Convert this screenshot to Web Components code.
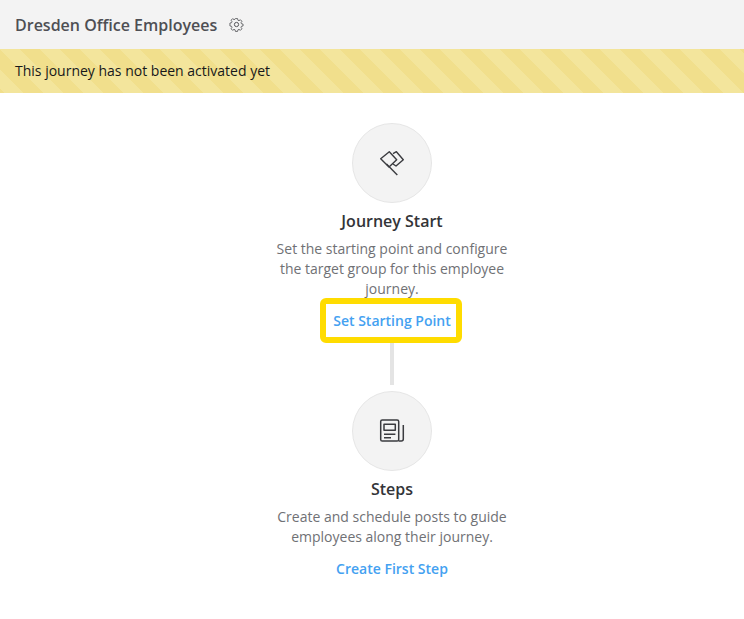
<!DOCTYPE html>
<html>
<head>
<meta charset="utf-8">
<title>Dresden Office Employees</title>
<style>
  html, body { margin: 0; padding: 0; background: #fff; }
  body { font-family: "Open Sans", "Liberation Sans", sans-serif; }
</style>
</head>
<body>
<journey-page>
  <journey-header slot="header" title="Dresden Office Employees"></journey-header>
  <journey-banner slot="header">This journey has not been activated yet</journey-banner>
  <journey-step heading="Journey Start" link="Set Starting Point" highlighted icon="flag">
    Set the starting point and configure the target group for this employee journey.
  </journey-step>
  <journey-line></journey-line>
  <journey-step heading="Steps" link="Create First Step" icon="news">
    Create and schedule posts to guide employees along their journey.
  </journey-step>
</journey-page>

<script>
const ICONS = {
  flag: `<svg width="26" height="26" viewBox="0 0 26 26" fill="none" stroke="#3a3b3f" stroke-width="1.4" stroke-linejoin="round">
      <path d="M1.7 8.7 L10.3 1.7 L17.7 9.7 L10 17 Z"/>
      <path d="M14 3.6 L17.4 1.7 L24.3 9.7 L17 16 L14 14"/>
      <path d="M7.5 14 L18.3 25"/>
    </svg>`,
  news: `<svg width="26" height="26" viewBox="0 0 26 26" fill="none" stroke="#3a3b3f" stroke-width="1.5" stroke-linejoin="round">
      <rect x="1.7" y="2" width="18" height="21" rx="1.6"/>
      <rect x="5" y="6.3" width="11.3" height="6"/>
      <path d="M5 16.3h11.4M5 19.7h7"/>
      <path d="M24.3 7v14a2 2 0 0 1-2 2h-2.6"/>
    </svg>`
}

class JourneyPage extends HTMLElement {
  constructor () {
    super()
    this.attachShadow({ mode: 'open' })
  }

  connectedCallback () {
    this.shadowRoot.innerHTML = `
      <style>
      :host { display: block; min-height: 619px; }
      main {
        display: flex;
        flex-direction: column;
        align-items: center;
        padding: 30px 0 0 40px;
      }
      </style>
      <slot name="header"></slot>
      <main><slot></slot></main>
    `
  }
}

class JourneyHeader extends HTMLElement {
  constructor () {
    super()
    this.attachShadow({ mode: 'open' })
  }

  connectedCallback () {
    this.shadowRoot.innerHTML = `
      <style>
      :host {
        display: flex;
        align-items: center;
        box-sizing: border-box;
        height: 49px;
        padding-left: 15px;
        background: #f3f3f3;
      }
      h1 {
        margin: 0;
        font: 600 16px/24px "Open Sans", "Liberation Sans", sans-serif;
        color: #4e4f54;
      }
      svg { margin-left: 12px; display: block; }
      </style>
      <h1>${this.getAttribute('title')}</h1>
      <svg width="15" height="15" viewBox="0 0 24 24" fill="none" stroke="#55565a" stroke-width="1.6" stroke-linejoin="round">
        <circle cx="12" cy="12" r="3.4"/>
        <path d="M10 2h4l.7 3.1 1.9.8 2.7-1.7 2.8 2.8-1.7 2.7.8 1.9 3 .7v3.4l-3 .7-.8 1.9 1.7 2.7-2.8 2.8-2.7-1.7-1.9.8-.7 3h-4l-.7-3-1.9-.8-2.7 1.7-2.8-2.8 1.7-2.7-.8-1.9-3-.7V10.3l3-.7.8-1.9-1.7-2.7 2.8-2.8 2.7 1.7 1.9-.8z" transform="translate(12 12) scale(.86) translate(-12 -13)"/>
      </svg>
    `
  }
}

class JourneyBanner extends HTMLElement {
  constructor () {
    super()
    this.attachShadow({ mode: 'open' })
  }

  connectedCallback () {
    this.shadowRoot.innerHTML = `
      <style>
      :host {
        display: flex;
        align-items: center;
        box-sizing: border-box;
        height: 44px;
        padding-left: 15px;
        font: 400 14px/20px "Open Sans", "Liberation Sans", sans-serif;
        color: #17181a;
        background: repeating-linear-gradient(45deg, #f3e59c 2.83px, #f3e59c 16.97px, #f1df8c 16.97px, #f1df8c 31.11px);
      }
      </style>
      <slot></slot>
    `
  }
}

class JourneyStep extends HTMLElement {
  constructor () {
    super()
    this.attachShadow({ mode: 'open' })
  }

  connectedCallback () {
    const highlighted = this.hasAttribute('highlighted')
    this.shadowRoot.innerHTML = `
      <style>
      :host {
        display: flex;
        flex-direction: column;
        align-items: center;
        font-family: "Open Sans", "Liberation Sans", sans-serif;
      }
      .circle {
        display: flex;
        align-items: center;
        justify-content: center;
        box-sizing: border-box;
        width: 80px;
        height: 80px;
        border-radius: 50%;
        border: 1px solid #e6e6e6;
        background: #f3f3f3;
      }
      h2 {
        margin: 7px 0 7px;
        font-size: 16px;
        font-weight: 600;
        line-height: 22px;
        color: #333438;
      }
      p {
        margin: 0;
        width: 250px;
        text-align: center;
        font-size: 14px;
        line-height: 20px;
        color: #707175;
      }
      a {
        display: block;
        box-sizing: border-box;
        font-size: 14px;
        font-weight: 600;
        line-height: 20px;
        color: #44a1f1;
        text-decoration: none;
        text-align: center;
      }
      a.plain { margin-top: 12px; padding-bottom: 5px; }
      a.hot {
        margin: -1px 2px 0 0;
        padding-left: 2px;
        width: 142px;
        height: 45px;
        line-height: 33px;
        border: 6px solid #ffdc00;
        border-radius: 6px;
      }
      </style>
      <div class="circle">${ICONS[this.getAttribute('icon')]}</div>
      <h2>${this.getAttribute('heading')}</h2>
      <p><slot></slot></p>
      <a class="${highlighted ? 'hot' : 'plain'}" href="#">${this.getAttribute('link')}</a>
    `
  }
}

class JourneyLine extends HTMLElement {
  constructor () {
    super()
    this.attachShadow({ mode: 'open' })
  }

  connectedCallback () {
    this.shadowRoot.innerHTML = `
      <style>
      :host {
        display: block;
        width: 4px;
        height: 42px;
        margin-bottom: 6px;
        background: #e4e4e4;
      }
      </style>
    `
  }
}

customElements.define('journey-page', JourneyPage)
customElements.define('journey-header', JourneyHeader)
customElements.define('journey-banner', JourneyBanner)
customElements.define('journey-step', JourneyStep)
customElements.define('journey-line', JourneyLine)
</script>
</body>
</html>
